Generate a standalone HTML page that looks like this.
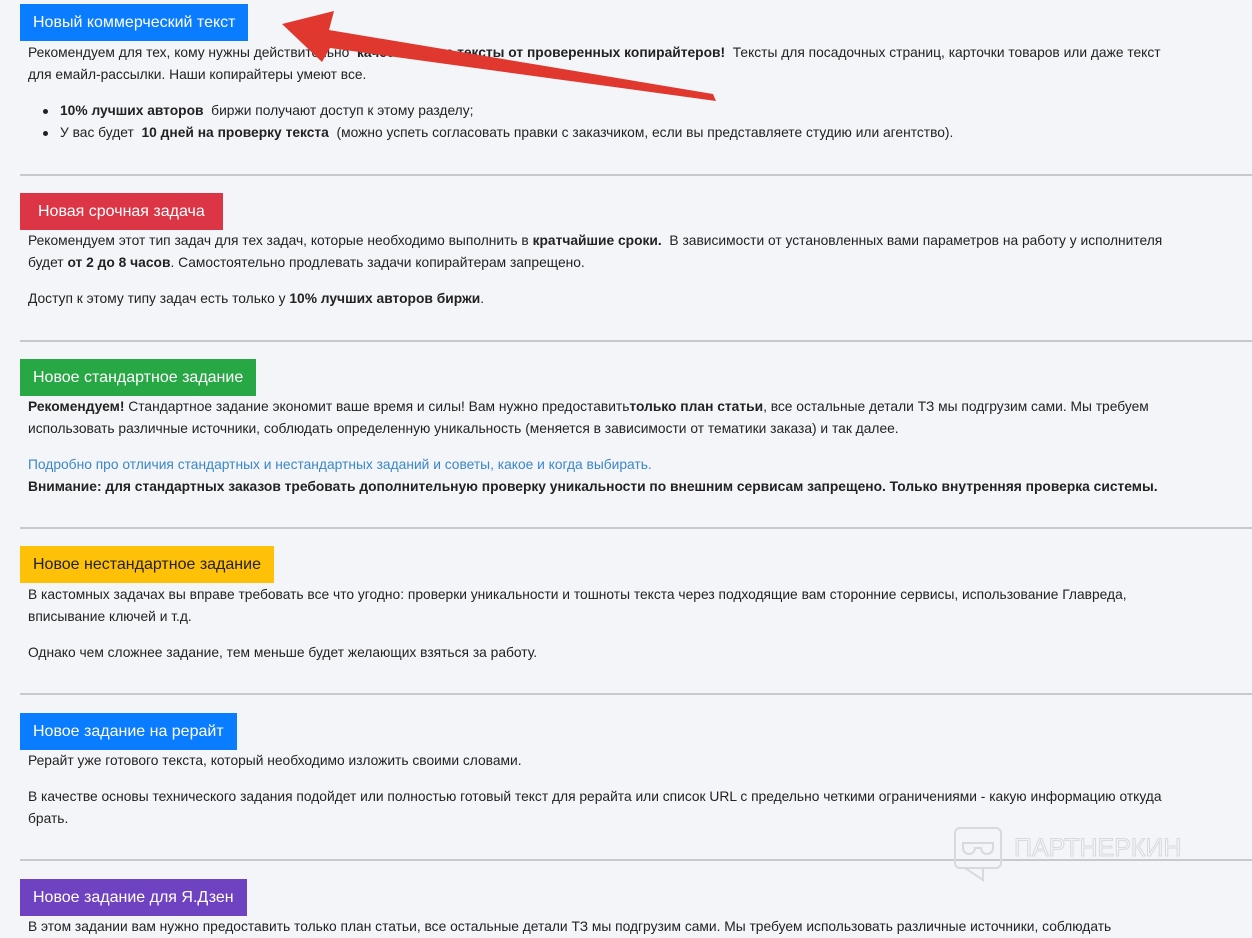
<!DOCTYPE html><html><head><meta charset="utf-8"><style>
body{margin:0;width:1252px;height:932px;background:#f4f5f9;font-family:"Liberation Sans",sans-serif;font-size:13.8px;color:#222;position:relative;overflow:hidden}
.b{position:absolute;left:20px;height:37px;line-height:37px;color:#fff;font-size:16px;padding:0 13px}
.t{position:absolute;left:28px;line-height:22px;white-space:nowrap}
.hr{position:absolute;left:20px;right:0;height:2px;background:#c8c9cc}
.li{left:60px}
.li:before{content:"";position:absolute;left:-17px;top:9px;width:5px;height:5px;border-radius:50%;background:#222}
a{color:#3a87c8;text-decoration:none}
</style></head><body>
<div class="b" style="top:4px;background:#0a7cff">Новый коммерческий текст</div>
<div class="t" style="top:42px">Рекомендуем для тех, кому нужны действительно &nbsp;<b>качественные тексты от проверенных копирайтеров!</b> &nbsp;Тексты для посадочных страниц, карточки товаров или даже текст</div>
<div class="t" style="top:64px">для емайл-рассылки. Наши копирайтеры умеют все.</div>
<div class="t li" style="top:100px"><b>10% лучших авторов</b> &nbsp;биржи получают доступ к этому разделу;</div>
<div class="t li" style="top:122px">У вас будет &nbsp;<b>10 дней на проверку текста</b> &nbsp;(можно успеть согласовать правки с заказчиком, если вы представляете студию или агентство).</div>
<div class="hr" style="top:174px"></div>
<div class="b" style="top:193px;background:#dc3545;padding:0 18px">Новая срочная задача</div>
<div class="t" style="top:230px">Рекомендуем этот тип задач для тех задач, которые необходимо выполнить в <b>кратчайшие сроки.</b> &nbsp;В зависимости от установленных вами параметров на работу у исполнителя</div>
<div class="t" style="top:252px">будет <b>от 2 до 8 часов</b>. Самостоятельно продлевать задачи копирайтерам запрещено.</div>
<div class="t" style="top:288px">Доступ к этому типу задач есть только у <b>10% лучших авторов биржи</b>.</div>
<div class="hr" style="top:340px"></div>
<div class="b" style="top:359px;background:#28a745">Новое стандартное задание</div>
<div class="t" style="top:396px"><b>Рекомендуем!</b> Стандартное задание экономит ваше время и силы! Вам нужно предоставить<b>только план статьи</b>, все остальные детали ТЗ мы подгрузим сами. Мы требуем</div>
<div class="t" style="top:418px">использовать различные источники, соблюдать определенную уникальность (меняется в зависимости от тематики заказа) и так далее.</div>
<div class="t" style="top:454px"><a>Подробно про отличия стандартных и нестандартных заданий и советы, какое и когда выбирать.</a></div>
<div class="t" style="top:476px"><b>Внимание: для стандартных заказов требовать дополнительную проверку уникальности по внешним сервисам запрещено. Только внутренняя проверка системы.</b></div>
<div class="hr" style="top:527px"></div>
<div class="b" style="top:546px;background:#ffc107;color:#222">Новое нестандартное задание</div>
<div class="t" style="top:584px">В кастомных задачах вы вправе требовать все что угодно: проверки уникальности и тошноты текста через подходящие вам сторонние сервисы, использование Главреда,</div>
<div class="t" style="top:606px">вписывание ключей и т.д.</div>
<div class="t" style="top:642px">Однако чем сложнее задание, тем меньше будет желающих взяться за работу.</div>
<div class="hr" style="top:693px"></div>
<div class="b" style="top:713px;background:#0a7cff">Новое задание на рерайт</div>
<div class="t" style="top:750px">Рерайт уже готового текста, который необходимо изложить своими словами.</div>
<div class="t" style="top:786px">В качестве основы технического задания подойдет или полностью готовый текст для рерайта или список URL с предельно четкими ограничениями - какую информацию откуда</div>
<div class="t" style="top:808px">брать.</div>
<div class="hr" style="top:859px"></div>
<div class="b" style="top:879px;background:#6f42c1">Новое задание для Я.Дзен</div>
<div class="t" style="top:916px">В этом задании вам нужно предоставить только план статьи, все остальные детали ТЗ мы подгрузим сами. Мы требуем использовать различные источники, соблюдать</div>
<svg style="position:absolute;left:0;top:0" width="1252" height="932">
<polygon points="713,94 716,101 330,48 322,62 282,24 334,11 329,30" fill="#e0382e"/>
<g fill="none" stroke="#d8d9dd" stroke-width="2">
<rect x="955" y="828" width="46" height="40" rx="5"/>
<path d="M965 868 L983 880 L983 868"/>
<path d="M963 843 h30 v5 a6 6 0 0 1 -12 0 h-6 a6 6 0 0 1 -12 0z"/>
</g>
<text x="1014" y="856" font-family="Liberation Sans" font-size="25" fill="none" stroke="#d8d9dd" stroke-width="1">ПАРТНЕРКИН</text>
</svg>
</body></html>
